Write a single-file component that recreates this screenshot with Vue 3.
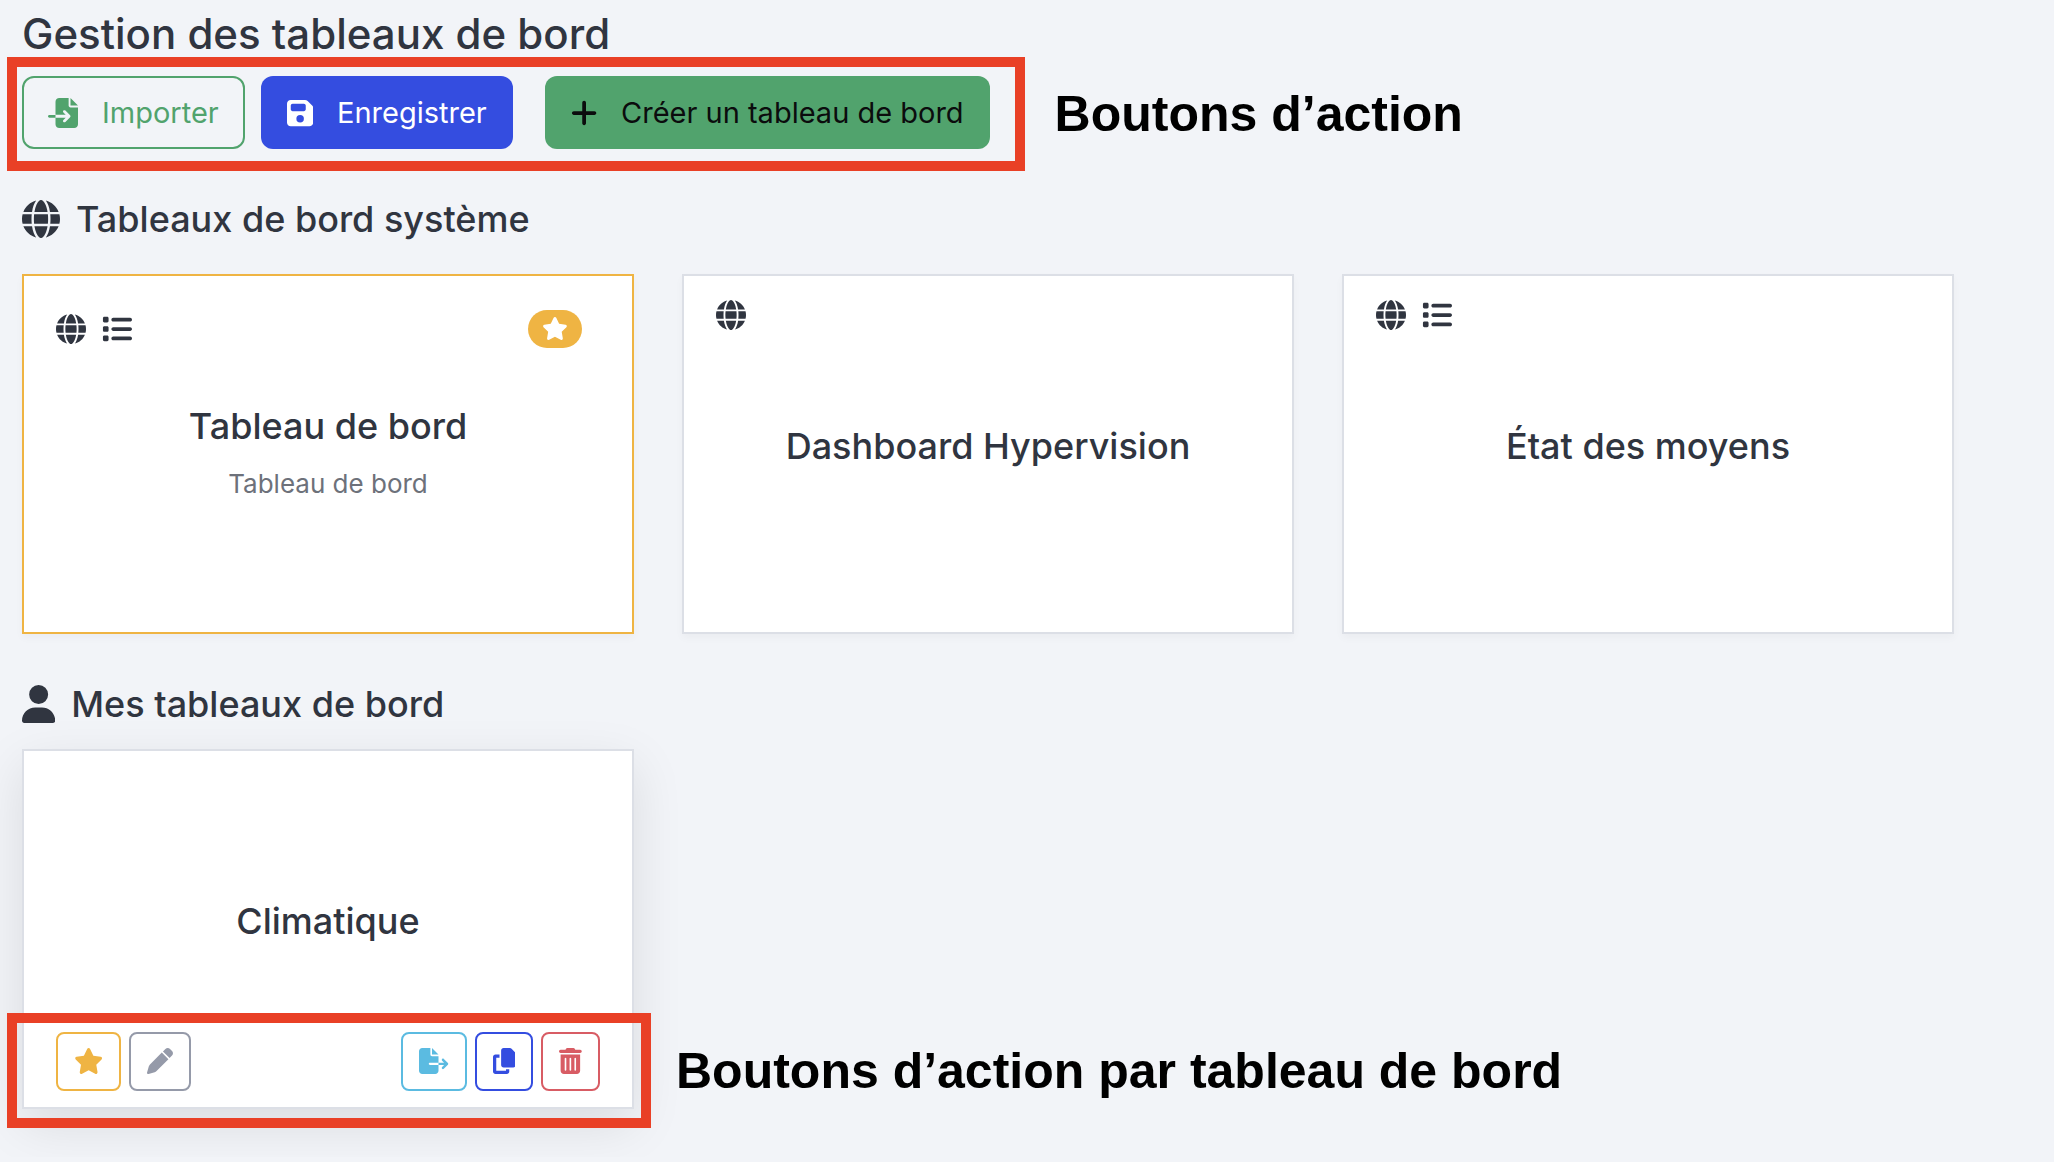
<script setup>
import { ref } from 'vue'

const icons = {
  globe: {
    box: '0 0 512 512',
    d: 'M352 256c0 22.2-1.2 43.6-3.3 64H163.3c-2.2-20.4-3.3-41.8-3.3-64s1.2-43.6 3.3-64H348.7c2.2 20.4 3.3 41.8 3.3 64zm28.8-64H503.9c5.3 20.5 8.1 41.9 8.1 64s-2.8 43.5-8.1 64H380.8c2.1-20.6 3.2-42 3.2-64s-1.1-43.4-3.2-64zm112.6-32H376.7c-10-63.9-29.8-117.4-55.3-151.6c78.3 20.7 142 77.5 171.9 151.6zm-149.1 0H167.7c6.1-36.4 15.5-68.6 27-94.7c10.5-23.6 22.2-40.7 33.5-51.5C239.4 3.2 248.7 0 256 0s16.6 3.2 27.8 13.8c11.3 10.8 23 27.9 33.5 51.5c11.6 26 20.9 58.2 27 94.7zm-209 0H18.6C48.6 85.9 112.2 29.1 190.6 8.4C165.1 42.6 145.3 96.1 135.3 160zM8.1 192H131.2c-2.1 20.6-3.2 42-3.2 64s1.1 43.4 3.2 64H8.1C2.8 299.5 0 278.1 0 256s2.8-43.5 8.1-64zM194.7 446.6c-11.6-26-20.9-58.2-27-94.6H344.3c-6.1 36.4-15.5 68.6-27 94.6c-10.5 23.6-22.2 40.7-33.5 51.5C272.6 508.8 263.3 512 256 512s-16.6-3.2-27.8-13.8c-11.3-10.8-23-27.9-33.5-51.5zM135.3 352c10 63.9 29.8 117.4 55.3 151.6C112.2 482.9 48.6 426.1 18.6 352H135.3zm358.1 0c-30 74.1-93.6 130.9-171.9 151.6c25.5-34.2 45.2-87.7 55.3-151.6H493.4z'
  },
  list: {
    box: '0 0 512 512',
    d: 'M40 48C26.7 48 16 58.7 16 72v48c0 13.3 10.7 24 24 24H88c13.3 0 24-10.7 24-24V72c0-13.3-10.7-24-24-24H40zM192 64c-17.7 0-32 14.3-32 32s14.3 32 32 32H480c17.7 0 32-14.3 32-32s-14.3-32-32-32H192zm0 160c-17.7 0-32 14.3-32 32s14.3 32 32 32H480c17.7 0 32-14.3 32-32s-14.3-32-32-32H192zm0 160c-17.7 0-32 14.3-32 32s14.3 32 32 32H480c17.7 0 32-14.3 32-32s-14.3-32-32-32H192zM16 232v48c0 13.3 10.7 24 24 24H88c13.3 0 24-10.7 24-24V232c0-13.3-10.7-24-24-24H40c-13.3 0-24 10.7-24 24zM40 368c-13.3 0-24 10.7-24 24v48c0 13.3 10.7 24 24 24H88c13.3 0 24-10.7 24-24V392c0-13.3-10.7-24-24-24H40z'
  },
  star: {
    box: '0 0 576 512',
    d: 'M316.9 18C311.6 7 300.4 0 288.1 0s-23.4 7-28.8 18L195 150.3 51.4 171.5c-12 1.8-22 10.2-25.7 21.7s-.7 24.2 7.9 32.7L137.8 329 113.2 474.7c-2 12 3 24.2 12.9 31.3s23 8 33.8 2.3l128.3-68.5 128.3 68.5c10.8 5.7 23.9 4.9 33.8-2.3s14.9-19.3 12.9-31.3L438.5 329 542.7 225.9c8.6-8.5 11.7-21.2 7.9-32.7s-13.7-19.9-25.7-21.7L381.2 150.3 316.9 18z'
  },
  user: {
    box: '0 0 448 512',
    d: 'M224 256A128 128 0 1 0 224 0a128 128 0 1 0 0 256zm-45.7 48C79.8 304 0 383.8 0 482.3C0 498.7 13.3 512 29.7 512H418.3c16.4 0 29.7-13.3 29.7-29.7C448 383.8 368.2 304 269.7 304H178.3z'
  },
  plus: {
    box: '0 0 448 512',
    d: 'M256 80c0-17.7-14.3-32-32-32s-32 14.3-32 32V224H48c-17.7 0-32 14.3-32 32s14.3 32 32 32H192V432c0 17.7 14.3 32 32 32s32-14.3 32-32V288H400c17.7 0 32-14.3 32-32s-14.3-32-32-32H256V80z'
  },
  save: {
    box: '0 0 448 512',
    d: 'M64 32C28.7 32 0 60.7 0 96V416c0 35.3 28.7 64 64 64H384c35.3 0 64-28.7 64-64V173.3c0-17-6.7-33.3-18.7-45.3L352 50.7C340 38.7 323.7 32 306.7 32H64zm0 96c0-17.7 14.3-32 32-32H288c17.7 0 32 14.3 32 32v64c0 17.7-14.3 32-32 32H96c-17.7 0-32-14.3-32-32V128zM224 288a64 64 0 1 1 0 128 64 64 0 1 1 0-128z'
  },
  fileImport: {
    box: '0 0 512 512',
    d: 'M128 64c0-35.3 28.7-64 64-64H352V128c0 17.7 14.3 32 32 32H512V448c0 35.3-28.7 64-64 64H192c-35.3 0-64-28.7-64-64V336H302.1l-39 39c-9.4 9.4-9.4 24.6 0 33.9s24.6 9.4 33.9 0l80-80c9.4-9.4 9.4-24.6 0-33.9l-80-80c-9.4-9.4-24.6-9.4-33.9 0s-9.4 24.6 0 33.9l39 39H128V64zm0 224v48H24c-13.3 0-24-10.7-24-24s10.7-24 24-24H128zM512 128H384V0L512 128z'
  },
  fileExport: {
    box: '0 0 576 512',
    d: 'M0 64C0 28.7 28.7 0 64 0H224V128c0 17.7 14.3 32 32 32H384V288H216c-13.3 0-24 10.7-24 24s10.7 24 24 24H384V448c0 35.3-28.7 64-64 64H64c-35.3 0-64-28.7-64-64V64zM384 336V288H494.1l-39-39c-9.4-9.4-9.4-24.6 0-33.9s24.6-9.4 33.9 0l80 80c9.4 9.4 9.4 24.6 0 33.9l-80 80c-9.4 9.4-24.6 9.4-33.9 0s-9.4-24.6 0-33.9l39-39H384zm0-208H256V0L384 128z'
  },
  pen: {
    box: '0 0 512 512',
    d: 'M362.7 19.3L314.3 67.7 444.3 197.7l48.4-48.4c25-25 25-65.5 0-90.5L453.3 19.3c-25-25-65.5-25-90.5 0zm-71 71L58.6 323.5c-10.4 10.4-18 23.3-22.2 37.4L1 481.2C-1.5 489.7 .8 498.8 7 505s15.3 8.5 23.7 6.1l120.3-35.4c14.1-4.2 27-11.8 37.4-22.2L421.7 220.3 291.7 90.3z'
  },
  copy: {
    box: '0 0 448 512',
    d: 'M208 0H332.1c12.7 0 24.9 5.1 33.9 14.1l67.9 67.9c9 9 14.1 21.2 14.1 33.9V336c0 26.5-21.5 48-48 48H208c-26.5 0-48-21.5-48-48V48c0-26.5 21.5-48 48-48zM48 128h80v64H64V448H256V416h64v48c0 26.5-21.5 48-48 48H48c-26.5 0-48-21.5-48-48V176c0-26.5 21.5-48 48-48z'
  },
  trash: {
    box: '0 0 448 512',
    d: 'M135.2 17.7C140.6 6.8 151.7 0 163.8 0H284.2c12.1 0 23.2 6.8 28.6 17.7L320 32h96c17.7 0 32 14.3 32 32s-14.3 32-32 32H32C14.3 96 0 81.7 0 64S14.3 32 32 32h96l7.2-14.3zM32 128H416V448c0 35.3-28.7 64-64 64H96c-35.3 0-64-28.7-64-64V128zm96 64c-8.8 0-16 7.2-16 16V432c0 8.8 7.2 16 16 16s16-7.2 16-16V208c0-8.8-7.2-16-16-16zm96 0c-8.8 0-16 7.2-16 16V432c0 8.8 7.2 16 16 16s16-7.2 16-16V208c0-8.8-7.2-16-16-16zm96 0c-8.8 0-16 7.2-16 16V432c0 8.8 7.2 16 16 16s16-7.2 16-16V208c0-8.8-7.2-16-16-16z'
  }
}

const systemBoards = ref([
  {
    title: 'Tableau de bord',
    description: 'Tableau de bord',
    icons: ['globe', 'list'],
    favorite: true
  },
  {
    title: 'Dashboard Hypervision',
    icons: ['globe']
  },
  {
    title: 'État des moyens',
    icons: ['globe', 'list']
  }
])

const myBoards = ref([{ title: 'Climatique' }])

const leftActions = [
  { icon: 'star', type: 'warning', label: 'Favori' },
  { icon: 'pen', type: 'secondary', label: 'Modifier' }
]
const rightActions = [
  { icon: 'fileExport', type: 'info', label: 'Exporter' },
  { icon: 'copy', type: 'primary', label: 'Dupliquer' },
  { icon: 'trash', type: 'danger', label: 'Supprimer' }
]
</script>

<template>
  <main class="page">
    <h1 class="page-title">Gestion des tableaux de bord</h1>
    <div class="top">
      <div class="toolbar">
        <button type="button" class="btn btn-outline">
          <svg class="btn-icon" :viewBox="icons.fileImport.box"><path :d="icons.fileImport.d" /></svg>
          Importer
        </button>
        <button type="button" class="btn btn-save">
          <svg class="btn-icon" :viewBox="icons.save.box"><path :d="icons.save.d" /></svg>
          Enregistrer
        </button>
        <button type="button" class="btn btn-create">
          <svg class="btn-icon" :viewBox="icons.plus.box"><path :d="icons.plus.d" /></svg>
          Créer un tableau de bord
        </button>
      </div>
      <span class="note">Boutons d’action</span>
    </div>

    <section>
      <h2 class="section-title">
        <svg class="section-icon" :viewBox="icons.globe.box"><path :d="icons.globe.d" /></svg>
        Tableaux de bord système
      </h2>
      <div class="cards">
        <article
          class="card"
          :class="{ favorite: board.favorite }"
          v-for="(board, i) in systemBoards"
          :key="i"
        >
          <div class="card-head">
            <svg class="card-icon" v-for="name in board.icons" :key="name" :viewBox="icons[name].box">
              <path :d="icons[name].d" />
            </svg>
            <span class="badge" v-if="board.favorite">
              <svg class="badge-icon" :viewBox="icons.star.box"><path :d="icons.star.d" /></svg>
            </span>
          </div>
          <div class="card-body">
            <h3 class="card-title">{{ board.title }}</h3>
            <p class="card-text" v-if="board.description">{{ board.description }}</p>
          </div>
        </article>
      </div>
    </section>

    <section class="mine">
      <h2 class="section-title">
        <svg class="section-icon" :viewBox="icons.user.box"><path :d="icons.user.d" /></svg>
        Mes tableaux de bord
      </h2>
      <div class="cards">
        <article class="card raised" v-for="(board, i) in myBoards" :key="i">
          <div class="card-body">
            <h3 class="card-title">{{ board.title }}</h3>
          </div>
          <div class="card-actions">
            <div class="group">
              <button
                type="button"
                class="action"
                :class="action.type"
                v-for="action in leftActions"
                :key="action.icon"
                :aria-label="action.label"
              >
                <svg class="action-icon" :viewBox="icons[action.icon].box">
                  <path :d="icons[action.icon].d" />
                </svg>
              </button>
            </div>
            <div class="group">
              <button
                type="button"
                class="action"
                :class="action.type"
                v-for="action in rightActions"
                :key="action.icon"
                :aria-label="action.label"
              >
                <svg class="action-icon" :viewBox="icons[action.icon].box">
                  <path :d="icons[action.icon].d" />
                </svg>
              </button>
            </div>
          </div>
          <div class="highlight">
            <span class="note">Boutons d’action par tableau de bord</span>
          </div>
        </article>
      </div>
    </section>
  </main>
</template>

<style>
body {
  margin: 0;
  background: #f2f4f8;
}
</style>

<style scoped>
.page {
  padding: 7px 100px 48px 22px;
  font-family: Inter, 'Liberation Sans', sans-serif;
  color: #303540;
}
h1,
h2,
h3,
p {
  margin: 0;
  font-weight: 500;
}
svg {
  display: block;
  flex: none;
  width: auto;
  fill: currentColor;
}
button {
  font-family: inherit;
  cursor: pointer;
}
.page-title {
  font-size: 42px;
  line-height: 54px;
  margin-bottom: -4px;
}
.top {
  display: flex;
  align-items: center;
  gap: 30px;
  margin-left: -15px;
}
.toolbar {
  display: flex;
  border: 10px solid #e94026;
  padding: 9px 25px 12px 5px;
}
.btn {
  display: flex;
  align-items: center;
  gap: 24px;
  padding: 12px 24px;
  border: 2px solid transparent;
  border-radius: 12px;
  font-size: 29px;
  line-height: 45px;
}
.btn-icon {
  height: 30px;
}
.btn-outline {
  color: #51a36d;
  border-color: #51a36d;
  background: transparent;
}
.btn-save {
  color: #fff;
  background: #344de0;
  margin-left: 16px;
}
.btn-create {
  color: #0b0c0d;
  background: #51a36d;
  margin-left: 32px;
}
.note {
  font-family: 'Liberation Sans', Arial, sans-serif;
  font-size: 50px;
  font-weight: 700;
  color: #000;
  white-space: nowrap;
}
.section-title {
  display: flex;
  align-items: center;
  gap: 16px;
  font-size: 36px;
  line-height: 46px;
  padding: 25px 0 32px;
}
.section-icon {
  height: 38px;
}
.mine .section-title {
  padding: 47px 0 22px;
}
.cards {
  display: grid;
  grid-template-columns: repeat(3, 1fr);
  gap: 48px;
}
.card {
  position: relative;
  display: grid;
  min-height: 360px;
  box-sizing: border-box;
  background: #fff;
  border: 2px solid #dcdfe6;
  box-shadow: 0 4px 8px rgba(0, 0, 0, 0.03);
}
.card.favorite {
  border-color: #efb443;
}
.card.raised {
  box-shadow: 0 16px 48px rgba(0, 0, 0, 0.1);
}
/* head, body and actions share one cell so the title stays centered */
.card-head,
.card-body,
.card-actions {
  grid-area: 1 / 1;
}
.card-head {
  align-self: start;
  display: flex;
  align-items: center;
  gap: 16px;
  padding: 24px 32px;
}
.card-icon {
  height: 30px;
}
.badge {
  margin: 10px 18px 10px auto;
  padding: 7px 14px 8px;
  border-radius: 20px;
  background: #efb443;
  color: #fff;
}
.badge-icon {
  height: 23px;
}
.card-body {
  align-self: center;
  text-align: center;
}
.card-title {
  margin-bottom: 16px;
  font-size: 36px;
  line-height: 44px;
}
.card-text {
  font-size: 26px;
  font-weight: 400;
  line-height: 40px;
  color: #6d717a;
}
.card-actions {
  align-self: end;
  display: flex;
  justify-content: space-between;
  padding: 16px 32px;
}
.group {
  display: flex;
  gap: 8px;
}
.action {
  padding: 14px 16px 15px;
  border: 2px solid currentColor;
  border-radius: 8px;
  background: transparent;
}
.action-icon {
  height: 26px;
}
.warning {
  color: #efb443;
}
.secondary {
  color: #959aa9;
}
.info {
  color: #5bbbe1;
}
.primary {
  color: #344de0;
}
.danger {
  color: #d85c64;
}
.highlight {
  position: absolute;
  left: -17px;
  right: -19px;
  bottom: -21px;
  height: 95px;
  display: flex;
  align-items: center;
  border: 10px solid #e94026;
  pointer-events: none;
}
.highlight .note {
  position: absolute;
  left: 100%;
  margin-left: 35px;
}
</style>
